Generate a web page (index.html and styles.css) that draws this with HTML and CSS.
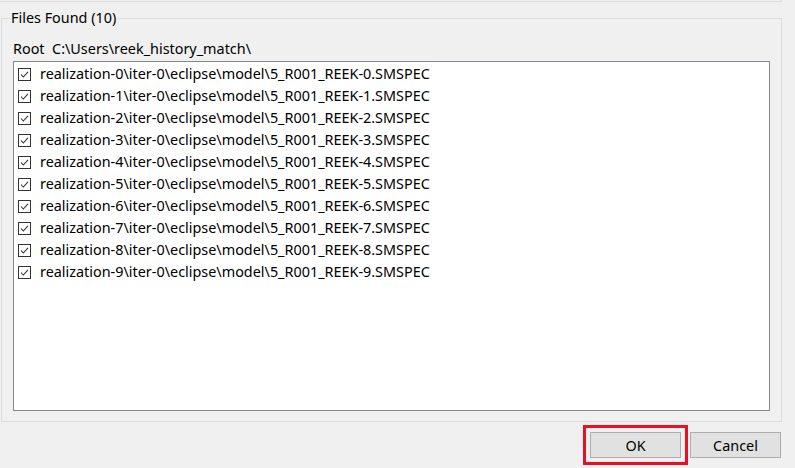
FILE: index.html
```html
<!DOCTYPE html>
<html>
<head>
<meta charset="utf-8">
<link rel="stylesheet" href="styles.css">
</head>
<body>
<div class="prev-group"></div>
<div class="group">
  <div class="group-title">Files Found (10)</div>
  <div class="root-line">Root&nbsp; C:\Users\reek_history_match\</div>
  <div class="list">
    <div class="row"><span class="cb"><svg width="13" height="13" viewBox="0 0 13 13"><rect x="0.5" y="0.5" width="12" height="12" fill="#fff" stroke="#333"/><path d="M3 6.5 L5.3 9 L10 3.8" fill="none" stroke="#333" stroke-width="1.1"/></svg></span><span class="txt">realization-0\iter-0\eclipse\model\5_R001_REEK-0.SMSPEC</span></div>
    <div class="row"><span class="cb"><svg width="13" height="13" viewBox="0 0 13 13"><rect x="0.5" y="0.5" width="12" height="12" fill="#fff" stroke="#333"/><path d="M3 6.5 L5.3 9 L10 3.8" fill="none" stroke="#333" stroke-width="1.1"/></svg></span><span class="txt">realization-1\iter-0\eclipse\model\5_R001_REEK-1.SMSPEC</span></div>
    <div class="row"><span class="cb"><svg width="13" height="13" viewBox="0 0 13 13"><rect x="0.5" y="0.5" width="12" height="12" fill="#fff" stroke="#333"/><path d="M3 6.5 L5.3 9 L10 3.8" fill="none" stroke="#333" stroke-width="1.1"/></svg></span><span class="txt">realization-2\iter-0\eclipse\model\5_R001_REEK-2.SMSPEC</span></div>
    <div class="row"><span class="cb"><svg width="13" height="13" viewBox="0 0 13 13"><rect x="0.5" y="0.5" width="12" height="12" fill="#fff" stroke="#333"/><path d="M3 6.5 L5.3 9 L10 3.8" fill="none" stroke="#333" stroke-width="1.1"/></svg></span><span class="txt">realization-3\iter-0\eclipse\model\5_R001_REEK-3.SMSPEC</span></div>
    <div class="row"><span class="cb"><svg width="13" height="13" viewBox="0 0 13 13"><rect x="0.5" y="0.5" width="12" height="12" fill="#fff" stroke="#333"/><path d="M3 6.5 L5.3 9 L10 3.8" fill="none" stroke="#333" stroke-width="1.1"/></svg></span><span class="txt">realization-4\iter-0\eclipse\model\5_R001_REEK-4.SMSPEC</span></div>
    <div class="row"><span class="cb"><svg width="13" height="13" viewBox="0 0 13 13"><rect x="0.5" y="0.5" width="12" height="12" fill="#fff" stroke="#333"/><path d="M3 6.5 L5.3 9 L10 3.8" fill="none" stroke="#333" stroke-width="1.1"/></svg></span><span class="txt">realization-5\iter-0\eclipse\model\5_R001_REEK-5.SMSPEC</span></div>
    <div class="row"><span class="cb"><svg width="13" height="13" viewBox="0 0 13 13"><rect x="0.5" y="0.5" width="12" height="12" fill="#fff" stroke="#333"/><path d="M3 6.5 L5.3 9 L10 3.8" fill="none" stroke="#333" stroke-width="1.1"/></svg></span><span class="txt">realization-6\iter-0\eclipse\model\5_R001_REEK-6.SMSPEC</span></div>
    <div class="row"><span class="cb"><svg width="13" height="13" viewBox="0 0 13 13"><rect x="0.5" y="0.5" width="12" height="12" fill="#fff" stroke="#333"/><path d="M3 6.5 L5.3 9 L10 3.8" fill="none" stroke="#333" stroke-width="1.1"/></svg></span><span class="txt">realization-7\iter-0\eclipse\model\5_R001_REEK-7.SMSPEC</span></div>
    <div class="row"><span class="cb"><svg width="13" height="13" viewBox="0 0 13 13"><rect x="0.5" y="0.5" width="12" height="12" fill="#fff" stroke="#333"/><path d="M3 6.5 L5.3 9 L10 3.8" fill="none" stroke="#333" stroke-width="1.1"/></svg></span><span class="txt">realization-8\iter-0\eclipse\model\5_R001_REEK-8.SMSPEC</span></div>
    <div class="row"><span class="cb"><svg width="13" height="13" viewBox="0 0 13 13"><rect x="0.5" y="0.5" width="12" height="12" fill="#fff" stroke="#333"/><path d="M3 6.5 L5.3 9 L10 3.8" fill="none" stroke="#333" stroke-width="1.1"/></svg></span><span class="txt">realization-9\iter-0\eclipse\model\5_R001_REEK-9.SMSPEC</span></div>
  </div>
</div>
<div class="buttons">
  <button class="btn btn-ok">OK</button>
  <button class="btn">Cancel</button>
</div>
</body>
</html>
```

FILE: styles.css
```css
html, body {
  margin: 0;
  padding: 0;
  background: #f0f0f0;
  width: 795px;
  height: 468px;
  overflow: hidden;
  font-family: "Noto Sans", "Open Sans", sans-serif;
  font-size: 14.4px;
  color: #000;
}

.prev-group {
  width: 781px;
  height: 1px;
  border-right: 1px solid #dcdcdc;
  border-bottom: 1px solid #dcdcdc;
  box-sizing: content-box;
}

.group {
  margin: 16px 0 0 1px;
  width: 781px;
  height: 404px;
  box-sizing: border-box;
  border: 1px solid #dcdcdc;
  padding: 0 11px 0 11px;
}

.group-title {
  display: block;
  width: fit-content;
  margin-top: -10px;
  margin-left: -3px;
  padding: 0 1px;
  background: #f0f0f0;
  line-height: 18px;
  height: 18px;
}

.root-line {
  margin-top: 13px;
  line-height: 18px;
  height: 18px;
}

.list {
  margin-top: 3px;
  width: 757px;
  height: 350px;
  box-sizing: border-box;
  background: #fff;
  border: 1px solid #828790;
  padding: 1px 0 0 4px;
}

.row {
  display: flex;
  align-items: center;
  height: 22px;
}

.cb {
  display: flex;
  width: 13px;
  height: 13px;
}

.txt {
  margin-left: 9px;
  white-space: nowrap;
  line-height: 22px;
}

.buttons {
  display: flex;
  justify-content: flex-end;
  gap: 9px;
  padding-right: 14px;
  margin-top: 10px;
}

.btn {
  width: 91px;
  height: 26px;
  box-sizing: border-box;
  background: #e1e1e1;
  border: 1px solid #adadad;
  font-family: "Noto Sans", "Open Sans", sans-serif;
  font-size: 14.4px;
  color: #000;
  padding: 0;
  margin: 0;
}

.btn-ok {
  outline: 3px solid #e81123;
  outline-offset: 4px;
}
```
